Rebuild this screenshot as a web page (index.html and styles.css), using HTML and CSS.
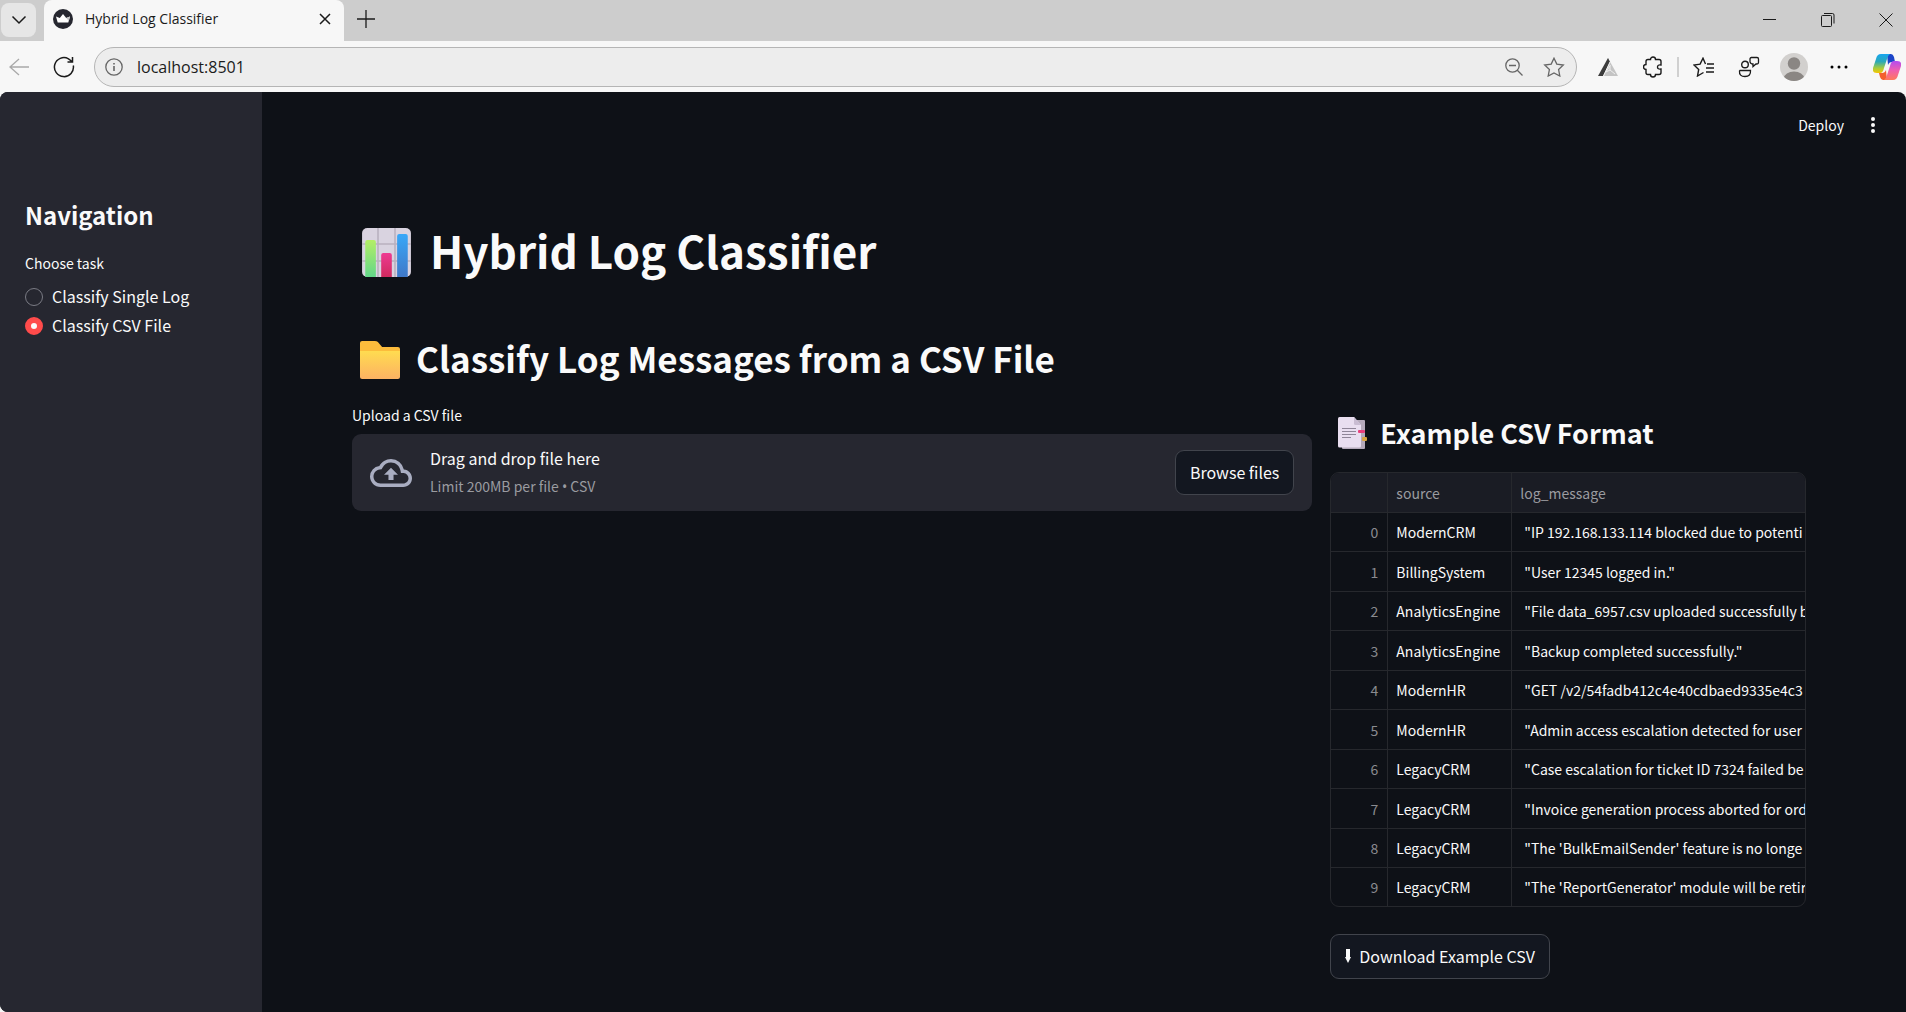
FILE: index.html
```html
<!DOCTYPE html>
<html lang="en">
<head>
<meta charset="utf-8">
<title>Hybrid Log Classifier</title>
<link rel="stylesheet" href="styles.css">
</head>
<body>
<header class="chrome">
  <div class="tabbar">
    <button class="tab-menu" aria-label="Tab actions"><svg width="16" height="16" viewBox="0 0 16 16" class="line"><path d="M1.500 4.500 8 11l6.500-6.500" stroke-width="1.500"/></svg></button>
    <div class="tab">
      <svg width="20" height="20" viewBox="0 0 20 20"><circle cx="10" cy="10" r="10" fill="#262730"/><path d="M3 7.500 6.800 9 10 5l3.200 4L17 7.500 15.300 13.500H4.700Z" fill="#fff"/><path d="M10 5l3.200 4L17 7.500 15.800 12Z" fill="#c4c4c6"/></svg>
      <span class="tab-title">Hybrid Log Classifier</span>
      <button class="icon-btn tab-close" aria-label="Close tab"><svg width="12" height="12" viewBox="0 0 12 12" class="line"><path d="M1 1l10 10M11 1 1 11" stroke-width="1.500"/></svg></button>
    </div>
    <button class="icon-btn new-tab" aria-label="New tab"><svg width="18" height="18" viewBox="0 0 18 18" class="line"><path d="M9 0v18M0 9h18" stroke-width="1.300"/></svg></button>
    <div class="window-controls">
      <button class="icon-btn" aria-label="Minimize"><svg width="14" height="14" viewBox="0 0 14 14" class="line"><path d="M0 6.500h13"/></svg></button>
      <button class="icon-btn" aria-label="Restore"><svg width="14" height="14" viewBox="0 0 14 14" class="line"><path d="M.5 3.500q0-1 1-1h8q1 0 1 1v9q0 1-1 1h-8q-1 0-1-1zM3 .5h8.500q1.500 0 1.500 1.500v8.500"/></svg></button>
      <button class="icon-btn" aria-label="Close"><svg width="14" height="14" viewBox="0 0 14 14" class="line"><path d="M.5.5l13 13M13.500.5l-13 13"/></svg></button>
    </div>
  </div>
  <div class="toolbar">
    <button class="icon-btn nav-btn faded" aria-label="Back"><svg width="22" height="20" viewBox="0 0 22 20" class="line"><path d="M21 10H2M11 2 2 10l9 8" stroke-width="1.300"/></svg></button>
    <button class="icon-btn nav-btn" aria-label="Refresh"><svg width="22" height="22" viewBox="0 0 22 22" class="line"><path d="M20.300 9.500A9.500 9.500 0 1 1 15.500 2.800L19 5.500M19.500 1v5h-5" stroke-width="1.500"/></svg></button>
    <div class="address">
      <svg width="18" height="18" viewBox="0 0 18 18" class="line gray"><circle cx="9" cy="9" r="8.200" stroke-width="1.300"/><path d="M9 8v5M9 5v1.500" stroke-width="1.600"/></svg>
      <input class="url" type="text" aria-label="Address" value="localhost:8501">
      <button class="icon-btn" aria-label="Zoom"><svg width="18" height="18" viewBox="0 0 18 18" class="line gray"><circle cx="7.500" cy="7.500" r="6.700" stroke-width="1.300"/><path d="M4 7.500h7M12.300 12.300l5.200 5.200" stroke-width="1.300"/></svg></button>
      <button class="icon-btn" aria-label="Add to favorites"><svg width="22" height="20" viewBox="0 0 22 20" class="line gray"><path d="M11 1.200 13.800 7.100 20.300 8 15.600 12.500 16.800 19 11 15.900 5.200 19 6.400 12.500 1.700 8 8.200 7.100Z" stroke-width="1.300"/></svg></button>
    </div>
    <button class="icon-btn tool" aria-label="Extension"><svg width="20" height="18" viewBox="0 0 20 18"><path d="M10 0 20 18H5Z" fill="#c4c4c4"/><path d="M0 18 10 0 12 4 5 18Z" fill="#3c3c3c"/><path d="M12 4 5.500 18" stroke="#f7f7f7"/><path d="M12.500 7 8 14l4-2 5 4M12 12v-4" fill="none" stroke="#eee"/></svg></button>
    <button class="icon-btn tool" aria-label="Extensions"><svg width="20" height="22" viewBox="0 0 20 22" class="line"><path d="M5 3.500h2.500a2.500 2.500 0 0 1 5 0H16q2 0 2 2V9q-3.500-.5-3.500 2T18 13v3.500q0 2-2 2h-3.500a2.500 2.500 0 0 1-5 0H5q-2 0-2-2V13.500a2.500 2.500 0 0 1 0-5v-3q0-2 2-2Z" stroke-width="1.400"/></svg></button>
    <span class="separator"></span>
    <button class="icon-btn tool" aria-label="Favorites"><svg width="22" height="20" viewBox="0 0 22 20" class="line"><path d="M12.500 7 10 1.200 7.100 7.100 1 8l4.700 4.500L4.500 19l6-3.500M14 7h7M13 11h8M13 15h8" stroke-width="1.400"/></svg></button>
    <button class="icon-btn tool" aria-label="Feedback"><svg width="22" height="22" viewBox="0 0 22 22" class="line"><circle cx="7" cy="8.500" r="3.300" stroke-width="1.400"/><path d="M2 14.500h10.500q.5 6-5.500 6t-5.500-5.500zM13 1.500h6q1.500 0 1.500 1.500v3.500q0 1.500-1.500 1.500h-1l-3 2.500V8h-1q-1.500-.5-2-2V3q0-1.500 1.500-1.500Z" stroke-width="1.300"/></svg></button>
    <button class="icon-btn tool" aria-label="Profile"><svg width="28" height="28" viewBox="0 0 28 28"><clipPath id="av"><circle cx="14" cy="14" r="14"/></clipPath><g clip-path="url(#av)"><path d="M0 0h28v28H0z" fill="#d2d0ce"/><circle cx="14" cy="10.500" r="6.200" fill="#8a8683"/><ellipse cx="14" cy="25" rx="10" ry="6.500" fill="#8a8683"/></g></svg></button>
    <button class="icon-btn tool" aria-label="Settings and more"><svg width="18" height="4" viewBox="0 0 18 4"><circle cx="2" cy="2" r="1.500"/><circle cx="9" cy="2" r="1.500"/><circle cx="16" cy="2" r="1.500"/></svg></button>
    <button class="icon-btn copilot" aria-label="Copilot"><svg width="28" height="26" viewBox="0 0 28 26">
      <defs>
        <linearGradient id="cp1" x1="0" y1="0" x2="0" y2="1"><stop offset="0" stop-color="#18a5f0"/><stop offset=".4" stop-color="#2aa9b8"/><stop offset=".75" stop-color="#a8cc3c"/><stop offset="1" stop-color="#f7c600"/></linearGradient>
        <linearGradient id="cp2" x1="0" y1="0" x2="0" y2="1"><stop offset="0" stop-color="#b44cf0"/><stop offset=".5" stop-color="#f05fae"/><stop offset="1" stop-color="#ff7a5a"/></linearGradient>
      </defs>
      <path d="M14 0h4q2 0 3 3l1 5h-3q-3 0-4 3z" fill="#1b45c8"/>
      <path d="M8 0h9q-2 1-3 5l-3 9q-1 5-4 5H4q-5 0-4-5L3 5q1-5 5-5Z" fill="url(#cp1)"/>
      <path d="M14 26h-4q-2 0-3-3l-1-4h3q3 0 4-3z" fill="#f4602f"/>
      <path d="M20 26h-9q2-1 3-5l3-9q1-5 4-5h3q5 0 4 5l-3 9q-1 5-5 5Z" fill="url(#cp2)"/>
    </svg></button>
  </div>
</header>

<div class="app">
  <aside class="sidebar">
    <h2 class="side-title">Navigation</h2>
    <fieldset class="tasks">
      <legend class="label">Choose task</legend>
      <label class="task"><input type="radio" name="task">Classify Single Log</label>
      <label class="task"><input type="radio" name="task" checked>Classify CSV File</label>
    </fieldset>
  </aside>
  <main class="main">
    <div class="app-header">
      <button class="deploy">Deploy</button>
      <button class="icon-btn more" aria-label="Main menu"><svg width="4" height="16" viewBox="0 0 4 16" fill="#fafafa"><circle cx="2" cy="2" r="2"/><circle cx="2" cy="8" r="2"/><circle cx="2" cy="14" r="2"/></svg></button>
    </div>
    <div class="content">
      <h1 class="title"><svg width="51" height="50" viewBox="0 0 48 50" preserveAspectRatio="none">
        <defs>
          <linearGradient id="g1" x1="0" y1="0" x2="0" y2="1"><stop offset="0" stop-color="#b4ee66"/><stop offset="1" stop-color="#62d789"/></linearGradient>
          <linearGradient id="g2" x1="0" y1="0" x2="0" y2="1"><stop offset="0" stop-color="#ee3a92"/><stop offset="1" stop-color="#cf2a5e"/></linearGradient>
          <linearGradient id="g3" x1="0" y1="0" x2="0" y2="1"><stop offset="0" stop-color="#38a8f8"/><stop offset="1" stop-color="#3f78c8"/></linearGradient>
        </defs>
        <rect x="1" y="1" width="46" height="49" rx="5" fill="#d9d3e0"/>
        <path d="M16 1v49M32 1v49M1 17h46M1 34h46" stroke="#b9b1bf" stroke-width="1.500"/>
        <path d="M4 50V15q0-2 2-2h6q2 0 2 2v35Z" fill="url(#g1)"/>
        <path d="M19 50V28q0-2 2-2h6q2 0 2 2v22Z" fill="url(#g2)"/>
        <path d="M34 50V9q0-2 2-2h6q2 0 2 2v41Z" fill="url(#g3)"/>
      </svg>Hybrid Log Classifier</h1>
      <h2 class="subtitle"><svg width="40" height="38" viewBox="0 0 38 38" preserveAspectRatio="none">
        <defs><linearGradient id="f" x1="0" y1="0" x2="0" y2="1"><stop offset="0" stop-color="#ffdc50"/><stop offset="1" stop-color="#fcb263"/></linearGradient></defs>
        <path d="M0 2q0-2 2-2h12q2 0 3 1l4 5h15q2 0 2 2v8H0Z" fill="#fcbc3c"/>
        <path d="M0 10h38v26q0 2-2 2H2q-2 0-2-2Z" fill="url(#f)"/>
      </svg>Classify Log Messages from a CSV File</h2>
      <div class="columns">
        <section class="col-upload">
          <div class="label" id="upload-label">Upload a CSV file</div>
          <div class="dropzone" role="group" aria-labelledby="upload-label">
            <svg width="42" height="42" viewBox="0 0 24 24" fill="#a9adc1"><path d="M19.350 10.040A7.490 7.490 0 0 0 12 4C9.110 4 6.600 5.640 5.350 8.040A5.994 5.994 0 0 0 0 14c0 3.310 2.690 6 6 6h13c2.760 0 5-2.240 5-5 0-2.640-2.050-4.780-4.650-4.960zM19 18H6c-2.210 0-4-1.790-4-4 0-2.050 1.530-3.760 3.560-3.970l1.070-.11.500-.95A5.469 5.469 0 0 1 12 6c2.620 0 4.880 1.860 5.390 4.430l.3 1.500 1.530.11A2.980 2.980 0 0 1 22 15c0 1.650-1.350 3-3 3zM8 13h2.550v3h2.900v-3H16l-4-4z"/></svg>
            <div class="drop-text">
              <div class="drop-main">Drag and drop file here</div>
              <div class="drop-note">Limit 200MB per file <span class="bullet">•</span> CSV</div>
            </div>
            <button class="btn">Browse files</button>
          </div>
        </section>
        <section class="col-example">
          <h3 class="example-title"><svg width="30" height="32" viewBox="0 0 30 32">
            <path d="M4 3h22q1 0 1 1v27q0 1-1 1H5q-1 0-1-1Z" fill="#b5aabb"/>
            <path d="M0 1.500Q0 0 1.500 0H16l7 8v21q0 1.500-1.500 1.500h-20Q0 30.500 0 29Z" fill="#e9def0"/>
            <path d="M16 0v6.500Q16 8 17.500 8H23Z" fill="#c9bcd2"/>
            <path d="M4 11.500h14M4 14.500h14M4 17.500h14M4 20.500h9" stroke="#8f8598"/>
            <rect x="20" y="13" width="7" height="3" rx="1" fill="#ea3f7d"/><rect x="24" y="20" width="5" height="4" rx="1" fill="#d9a441"/>
          </svg>Example CSV Format</h3>
          <div class="table-frame">
            <table class="grid">
              <colgroup><col class="c-index"><col class="c-source"><col></colgroup>
              <thead><tr><th aria-label="Row"></th><th>source</th><th>log_message</th></tr></thead>
              <tbody>
                <tr><td>0</td><td>ModernCRM</td><td>"IP 192.168.133.114 blocked due to potenti</td></tr>
                <tr><td>1</td><td>BillingSystem</td><td>"User 12345 logged in."</td></tr>
                <tr><td>2</td><td>AnalyticsEngine</td><td>"File data_6957.csv uploaded successfully b</td></tr>
                <tr><td>3</td><td>AnalyticsEngine</td><td>"Backup completed successfully."</td></tr>
                <tr><td>4</td><td>ModernHR</td><td>"GET /v2/54fadb412c4e40cdbaed9335e4c3</td></tr>
                <tr><td>5</td><td>ModernHR</td><td>"Admin access escalation detected for user</td></tr>
                <tr><td>6</td><td>LegacyCRM</td><td>"Case escalation for ticket ID 7324 failed be</td></tr>
                <tr><td>7</td><td>LegacyCRM</td><td>"Invoice generation process aborted for ord</td></tr>
                <tr><td>8</td><td>LegacyCRM</td><td>"The 'BulkEmailSender' feature is no longe</td></tr>
                <tr><td>9</td><td>LegacyCRM</td><td>"The 'ReportGenerator' module will be retir</td></tr>
              </tbody>
            </table>
          </div>
          <button class="btn"><svg width="6" height="14" viewBox="0 0 6 14" fill="#fafafa"><path d="M1 0h4v8h1L3 14 0 8h1Z"/></svg>Download Example CSV</button>
        </section>
      </div>
    </div>
  </main>
</div>
</body>
</html>
```
FILE: styles.css
```css
* { box-sizing: border-box; }

body {
  margin: 0;
  min-height: 100vh;
  display: flex;
  flex-direction: column;
  background: #f7f7f7;
  color: #fafafa;
  font-family: "Noto Sans CJK SC", "Noto Sans", sans-serif;
  font-size: 16px;
}

h1, h2, h3 { margin: 0; font-weight: 700; }
button, input { font: inherit; color: inherit; }
svg { flex: none; display: block; }

.line { fill: none; stroke: #1b1b1b; }
.gray { stroke: #666; }

.icon-btn {
  display: flex;
  align-items: center;
  justify-content: center;
  padding: 0;
  border: 0;
  background: none;
}

/* Browser frame */
.chrome {
  color: #1b1b1b;
  font-family: "Open Sans", "Noto Sans", sans-serif;
}

.tabbar {
  display: flex;
  height: 41px;
  background: #cdcdcd;
}

.tab-menu {
  display: flex;
  align-items: center;
  justify-content: center;
  width: 35px;
  height: 34px;
  margin: 3px 8px 0 1px;
  padding: 0;
  border: 0;
  border-radius: 8px;
  background: #e6e6e6;
}

.tab {
  display: flex;
  align-items: center;
  width: 300px;
  padding: 0 13px 3px 9px;
  border-radius: 8px 8px 0 0;
  background: #f7f7f7;
}

.tab-title { flex: 1; margin-left: 12px; font-size: 14px; line-height: 20px; }
.tab-close { width: 12px; height: 12px; }
.new-tab { width: 44px; height: 38px; }
.window-controls { display: flex; margin-left: auto; }
.window-controls .icon-btn { width: 58px; height: 40px; }
.window-controls .icon-btn:last-child { width: 41px; margin-left: 8px; }

.toolbar {
  display: flex;
  align-items: center;
  height: 51px;
  padding-left: 8px;
}

.nav-btn { width: 22px; height: 40px; margin-right: 23px; }
.nav-btn + .nav-btn { margin-right: 19px; }
.faded { opacity: .35; }

.address {
  flex: 1;
  display: flex;
  align-items: center;
  height: 40px;
  margin-right: 8px;
  padding: 0 10px;
  border: 1px solid #b5b5b5;
  border-radius: 20px;
  background: #ededed;
}

.address .icon-btn { width: 24px; margin-left: 16px; }

.url {
  flex: 1;
  min-width: 0;
  padding: 0 14px;
  border: 0;
  outline: 0;
  background: none;
  font-size: 16px;
}

.tool { width: 45px; height: 40px; }
.copilot { width: 38px; height: 40px; margin-left: 7px; }
.separator { width: 2px; height: 20px; margin: 0 2px; background: #d0d0d0; }

/* Application */
.app {
  flex: 1;
  display: flex;
  overflow: hidden;
  border-radius: 8px 8px 0 8px;
  background: #0e1117;
}

.sidebar {
  width: 262px;
  padding: 108px 25px 26px;
  background: #262730;
}

.side-title { font-size: 24px; line-height: 30px; }
.label { padding: 0; font-size: 14px; line-height: 24px; }
.tasks { margin: 21px 0 0; padding: 0; border: 0; }
.tasks .label { margin-bottom: 7px; }

.task {
  display: flex;
  align-items: center;
  gap: 9px;
  line-height: 29px;
}

.task input {
  appearance: none;
  width: 18px;
  height: 18px;
  margin: 0;
  border: 1px solid #7a7b84;
  border-radius: 50%;
}

.task input:checked { border: 6px solid #ff4b4b; background: #fafafa; }

.main { flex: 1; min-width: 0; }

.app-header {
  display: flex;
  align-items: center;
  justify-content: flex-end;
  gap: 21px;
  height: 66px;
  padding-right: 25px;
}

.deploy { padding: 0; border: 0; background: none; font-size: 14px; }
.more { width: 16px; height: 24px; }

.content { padding: 65px 100px 32px 90px; }

.title {
  display: flex;
  align-items: center;
  gap: 18px;
  padding-left: 9px;
  font-size: 44px;
  line-height: 54px;
}

.title svg, .subtitle svg { margin-top: 3px; }

.subtitle {
  display: flex;
  align-items: center;
  gap: 16px;
  margin-top: 59px;
  padding-left: 8px;
  font-size: 35px;
  line-height: 44px;
}

.columns { display: flex; gap: 18px; margin-top: 23px; }
.col-upload { flex: 1 1 calc(66.6667% - 18px); min-width: 0; }
.col-example { flex: 1 1 calc(33.3333% - 18px); min-width: 0; padding-top: 13px; }

.dropzone {
  display: flex;
  align-items: center;
  gap: 18px;
  margin-top: 7px;
  padding: 12px 18px;
  border-radius: 9px;
  background: #262730;
}

.drop-text { flex: 1; }
.drop-main { line-height: 24px; }
.drop-note { margin-top: 4px; font-size: 14px; line-height: 24px; color: #9a9ba0; }
.bullet { font-family: "Noto Sans", sans-serif; }

.btn {
  display: flex;
  align-items: center;
  gap: 8px;
  height: 45px;
  padding: 0 14px 2px;
  border: 1px solid #41444c;
  border-radius: 9px;
  background: #131720;
}

.example-title {
  display: flex;
  align-items: center;
  gap: 12px;
  padding-left: 8px;
  font-size: 27px;
  line-height: 34px;
}

.table-frame {
  margin: 22px 0 27px;
  overflow: hidden;
  border: 1px solid #26282d;
  border-radius: 9px;
}

.grid {
  width: 100%;
  height: 433px;
  table-layout: fixed;
  border-collapse: separate;
  border-spacing: 0;
  font-size: 14px;
  line-height: 20px;
}

.c-index { width: 57px; }
.c-source { width: 124px; }

.grid th, .grid td {
  padding: 0 9px 0 8px;
  border-right: 1px solid #26282d;
  border-bottom: 1px solid #26282d;
  overflow: hidden;
  text-align: left;
  font-weight: 400;
  white-space: nowrap;
}

.grid th { height: 40px; background: #1a1c24; color: #9a9ba0; }
.grid td:first-child { text-align: right; color: #8a8b90; }
.grid td:last-child { padding: 0 0 0 12px; }
.grid tr > :last-child { border-right: 0; }
.grid tr:last-child td { border-bottom: 0; }
```
